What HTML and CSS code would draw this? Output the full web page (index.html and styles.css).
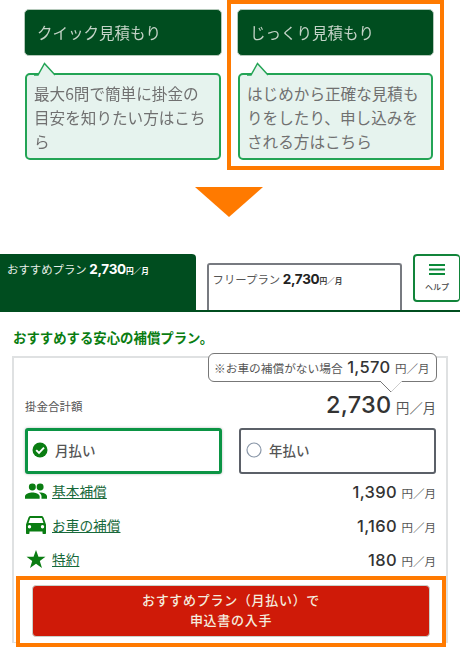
FILE: index.html
```html
<!DOCTYPE html>
<html lang="ja">
<head>
<meta charset="utf-8">
<title>見積もり</title>
<link rel="stylesheet" href="styles.css">
</head>
<body>
<section class="choices">
  <div class="choice">
    <div class="choice-btn">クイック見積もり</div>
    <div class="tip">最大6問で簡単に掛金の目安を知りたい方はこちら
      <svg class="tip-tail" viewBox="0 0 24 14" aria-hidden="true"><path d="M1 13 L5 13 L11.500 1.500 L22 13" fill="#e6f3ee" stroke="#23a455" stroke-width="1.500"/></svg>
    </div>
  </div>
  <div class="choice choice-marked">
    <div class="choice-btn">じっくり見積もり</div>
    <div class="tip">はじめから正確な見積もりをしたり、申し込みをされる方はこちら
      <svg class="tip-tail" viewBox="0 0 24 14" aria-hidden="true"><path d="M1 13 L5 13 L11.500 1.500 L22 13" fill="#e6f3ee" stroke="#23a455" stroke-width="1.500"/></svg>
    </div>
  </div>
</section>
<div class="arrow"></div>
<nav class="tabs">
  <div class="tab tab-active">おすすめプラン <b>2,730</b><small>円／月</small></div>
  <div class="tab tab-plain">フリープラン <b>2,730</b><small>円／月</small></div>
  <div class="help">
    <svg class="help-icon" viewBox="0 0 16 11" aria-hidden="true"><path d="M0 1h16M0 5.500h16M0 10h16" stroke="#0b8a3a" stroke-width="1.800"/></svg>
    <span>ヘルプ</span>
  </div>
</nav>
<main class="plan">
  <h1 class="plan-title">おすすめする安心の補償プラン。</h1>
  <div class="panel">
    <div class="note">※お車の補償がない場合 <b>1,570</b> <span>円／月</span>
      <svg class="note-tail" viewBox="0 0 24 12" aria-hidden="true"><path d="M0 0 L11 11 L22 0 Z" fill="#fff"/><path d="M0 0 L11 11" fill="none" stroke="#777" stroke-width="1"/><path d="M11 11 L22 0" fill="none" stroke="#ccc" stroke-width="1"/></svg>
    </div>
    <div class="total">
      <span class="total-label">掛金合計額</span>
      <span class="total-price"><b>2,730</b> <span>円／月</span></span>
    </div>
    <div class="radios">
      <div class="radio radio-on">
        <svg class="radio-icon" viewBox="0 0 16 16" aria-hidden="true"><circle cx="8" cy="8" r="7.500" fill="#0a7d12"/><path d="M4.200 8.200 L7 11 L12 5.600" fill="none" stroke="#fff" stroke-width="1.900"/></svg>
        月払い
      </div>
      <div class="radio radio-off">
        <svg class="radio-icon" viewBox="0 0 16 16" aria-hidden="true"><circle cx="8" cy="8" r="7" fill="#fff" stroke="#8a97a8" stroke-width="1.200"/></svg>
        年払い
      </div>
    </div>
    <ul class="rows">
      <li class="row">
        <svg class="row-icon" viewBox="0 0 24 17" aria-hidden="true"><path fill="#0a7d12" d="M8 8a3.800 3.800 0 1 0 0-7.600A3.800 3.800 0 0 0 8 8zm8.500 0a3.800 3.800 0 1 0 0-7.600 3.800 3.800 0 0 0 0 7.600zM8 10c-3 0-8 1.500-8 4.200V17h16v-2.800C16 11.500 11 10 8 10zm8.500 0c-.4 0-.9 0-1.400.1 1.700 1 2.900 2.400 2.900 4.100V17h6v-2.800c0-2.700-4.500-4.200-7.500-4.200z"/></svg>
        <a class="row-link">基本補償</a>
        <span class="row-price"><b>1,390</b> <span>円／月</span></span>
      </li>
      <li class="row">
        <svg class="row-icon" viewBox="0 0 20 18" aria-hidden="true"><path fill="#0a7d12" fill-rule="evenodd" d="M17.500 1.500C17.200.6 16.400 0 15.500 0h-11c-.9 0-1.700.6-2 1.500L0 8.500V17c0 .6.400 1 1 1h1.500c.6 0 1-.4 1-1v-1.500h13V17c0 .6.400 1 1 1H19c.6 0 1-.4 1-1V8.500zM3.500 12.500a1.700 1.700 0 1 1 0-3.400 1.700 1.700 0 0 1 0 3.400zm13 0a1.700 1.700 0 1 1 0-3.400 1.700 1.700 0 0 1 0 3.400zM2.500 7l1.700-5h11.600l1.700 5z"/></svg>
        <a class="row-link">お車の補償</a>
        <span class="row-price"><b>1,160</b> <span>円／月</span></span>
      </li>
      <li class="row">
        <svg class="row-icon" viewBox="0 0 20 19" aria-hidden="true"><path fill="#0a7d12" d="M10 0l2.600 7H20l-6 4.500 2.300 7.500L10 14.500 3.700 19 6 11.500 0 7h7.400z"/></svg>
        <a class="row-link">特約</a>
        <span class="row-price"><b>180</b> <span>円／月</span></span>
      </li>
    </ul>
    <div class="cta-frame">
      <button class="cta" type="button">おすすめプラン（月払い）で<br>申込書の入手</button>
    </div>
  </div>
</main>
</body>
</html>
```
FILE: styles.css
```css
* { box-sizing: border-box; }
html, body { margin: 0; padding: 0; background: #fff; }
body {
  width: 460px;
  height: 647px;
  overflow: hidden;
  font-family: "Noto Sans CJK JP", "Noto Sans", sans-serif;
  color: #333;
}

.choices { display: flex; align-items: flex-start; padding-left: 24px; gap: 5px; height: 170px; filter: blur(.35px); }
.choice { width: 198px; padding-top: 9px; }
.choice-marked { width: 217px; height: 170px; border: 4px solid #ff7a00; padding: 5px 6px 0; }
.choice-btn {
  height: 47px;
  background: #004d1f;
  border: 1px solid #b5c9bb;
  border-radius: 5px;
  color: #c3d3c7;
  font-size: 15.500px;
  line-height: 45px;
  padding-left: 12px;
}
.tip {
  position: relative;
  margin: 17px 1px 0;
  height: 87px;
  background: #e6f3ee;
  border: 2px solid #23a455;
  border-radius: 5px;
  padding: 6px 6px 0 7px;
  color: #707070;
  font-size: 15.600px;
  line-height: 24px;
}
.tip-tail { position: absolute; left: 6px; top: -13px; width: 24px; height: 14px; }

.arrow {
  width: 0;
  height: 0;
  margin: 17px 0 0 195px;
  border-left: 34.500px solid transparent;
  border-right: 34.500px solid transparent;
  border-top: 30px solid #ff7a00;
}

.tabs { display: flex; align-items: flex-start; margin-top: 37px; height: 58px; border-bottom: 2px solid #004d1f; }
.tab { font-size: 11.400px; white-space: nowrap; }
.tab b { font-family: Inter, sans-serif; font-size: 13.500px; font-weight: 700; letter-spacing: -.3px; }
.tab small { font-size: 7.700px; font-weight: 700; }
.tab-active { width: 196px; height: 56px; background: #004d1f; color: #e8efe9; border-radius: 0 4px 0 0; padding: 3px 0 0 7px; line-height: 24px; }
.tab-active b, .tab-active small { color: #fff; }
.tab-plain { width: 196px; height: 47px; margin: 9px 0 0 11px; border: 2px solid #777a80; border-bottom: 0; border-radius: 3px 3px 0 0; color: #555; padding: 2px 0 0 4px; line-height: 24px; }
.tab-plain b { color: #222; }
.tab-plain small { color: #444; }
.help {
  width: 47px;
  height: 48px;
  margin-left: 11px;
  border: 2px solid #11843a;
  border-right-width: 1px;
  border-radius: 4px;
  display: flex;
  flex-direction: column;
  align-items: center;
  color: #444;
  font-size: 8px;
  font-weight: 500;
}
.help-icon { width: 16px; height: 11px; margin-top: 8px; }
.help span { margin-top: 6px; line-height: 11px; }

.plan-title { margin: 15px 0 0 13px; height: 20px; font-size: 13.400px; line-height: 20px; font-weight: 700; color: #0a7d12; }
.panel { position: relative; width: 436px; height: 287px; margin: 9px 0 0 12px; border: 2px solid #dfe1e2; border-bottom-width: 1px; padding: 0 10px 0 11px; }

.note {
  position: absolute;
  right: 9px;
  top: -5px;
  width: 229px;
  height: 29px;
  background: #fff;
  border: 1px solid #777;
  border-radius: 6px;
  padding-left: 5px;
  font-size: 11.700px;
  line-height: 27px;
  color: #555;
  white-space: nowrap;
}
.note b { font-family: Inter, sans-serif; font-size: 16.500px; color: #333; font-weight: 500; letter-spacing: .3px; margin: 0 2px; }
.note span { font-size: 11.500px; color: #555; }
.note-tail { position: absolute; left: 171px; top: 27px; width: 24px; height: 12px; }

.total { display: flex; justify-content: space-between; align-items: flex-start; height: 70px; padding-top: 37px; }
.total-label { font-size: 11.500px; color: #555; line-height: 22px; }
.total-price { line-height: 22px; color: #555; white-space: nowrap; margin-top: -1px; }
.total-price b { font-family: Inter, sans-serif; font-size: 23.500px; font-weight: 500; color: #333; letter-spacing: .3px; margin-right: 1px; }
.total-price span { font-size: 13.300px; }

.radios { display: flex; justify-content: space-between; }
.radio { width: 197px; height: 46px; display: flex; align-items: center; gap: 7px; font-size: 13.500px; color: #555; font-weight: 500; background: #fff; border-radius: 3px; padding: 0 0 2px 4px; }
.radio-on { border: 3px solid #0b9444; box-shadow: 0 0 3px #bbb; }
.radio-off { border: 2px solid #5b6068; padding-left: 5px; }
.radio-icon { width: 16px; height: 16px; flex: none; }

.rows { list-style: none; margin: 0; padding: 0; }
.row { display: flex; align-items: center; height: 34px; }
.row-icon { width: 22px; height: 18px; margin-right: 5px; flex: none; }
.row-link { font-size: 13.700px; color: #17693a; text-decoration: underline; line-height: 20px; }
.row-price { margin-left: auto; color: #555; white-space: nowrap; }
.row-price b { font-family: Inter, sans-serif; font-size: 16.500px; font-weight: 500; color: #333; letter-spacing: .3px; margin-right: 1px; }
.row-price span { font-size: 11.500px; }

.cta-frame { position: absolute; left: 2px; top: 218px; width: 430px; height: 71px; border: 4px solid #ff7a00; padding: 5px 12px 0 12px; background: #fff; }
.cta {
  display: block;
  width: 398px;
  height: 52px;
  background: #cf1a08;
  border: 1px solid #c9d2cc;
  border-radius: 4px;
  color: #f4ecdf;
  font-family: inherit;
  font-size: 13px;
  font-weight: 500;
  line-height: 20px;
  letter-spacing: .7px;
  padding: 0 0 3px;
}
```
